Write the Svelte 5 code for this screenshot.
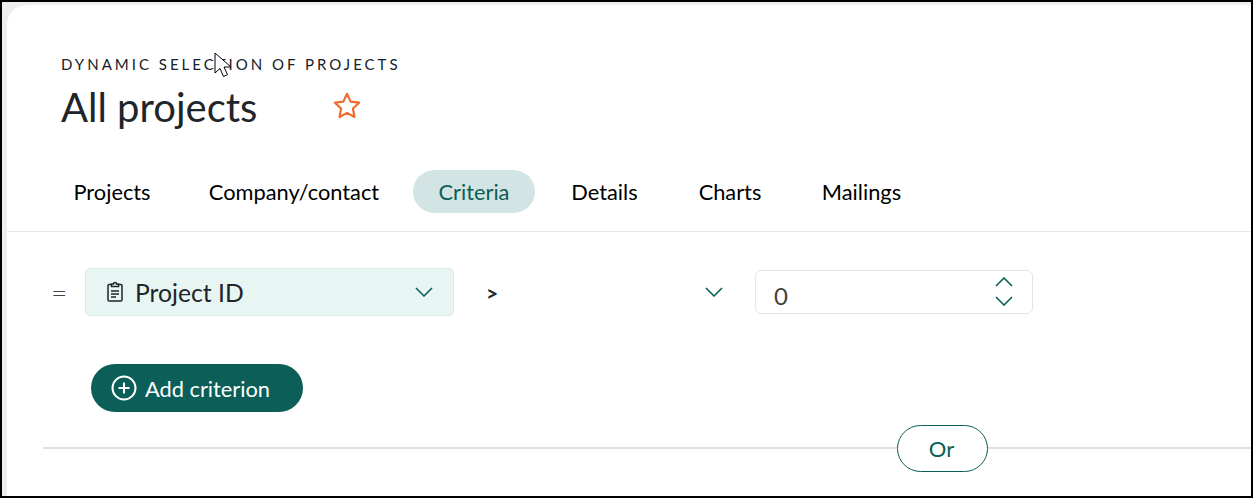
<script lang="ts">
    // Criteria tab of a dynamic project selection
    const tabs = ["Projects", "Company/contact", "Criteria", "Details", "Charts", "Mailings"];
    let active = "Criteria";
</script>

<div class="frame">
    <div class="card">
        <header class="head">
            <p class="eyebrow">DYNAMIC SELECTION OF PROJECTS</p>
            <div class="title-row">
                <h1>All projects</h1>
                <svg class="star" viewBox="0 0 28 28" width="30" height="30" aria-hidden="true">
                    <path d="M14 2.6l3.4 7.3 7.9 1-5.8 5.5 1.5 7.9-7-3.9-7 3.9 1.5-7.9-5.8-5.5 7.9-1z" />
                </svg>
            </div>
        </header>

        <nav class="tabs">
            {#each tabs as tab}
                <button class="tab" class:active={tab === active}>{tab}</button>
            {/each}
        </nav>

        <section class="criteria">
            <div class="row">
                <span class="equals">=</span>
                <div class="field-select">
                    <svg class="clip" viewBox="0 0 18 22" width="18" height="22" aria-hidden="true">
                        <path d="M5.5 3.5H3.2a1.2 1.2 0 0 0-1.2 1.2v14.1A1.2 1.2 0 0 0 3.2 20h11.6a1.2 1.2 0 0 0 1.2-1.2V4.700a1.200 1.200 0 0 0-1.200-1.200h-2.300" />
                        <path d="M5.500 5.500V3h2a1.500 1.500 0 0 1 3 0h2v2.500z" />
                        <path d="M5 10h8M5 13h8M5 16h5" />
                    </svg>
                    <span class="field-name">Project ID</span>
                    <svg class="chev first" viewBox="0 0 18 10" width="18" height="10" aria-hidden="true">
                        <path d="M1 1l8 8 8-8" />
                    </svg>
                </div>
                <div class="operator">
                    <span>&gt;</span>
                    <svg class="chev" viewBox="0 0 18 10" width="18" height="10" aria-hidden="true">
                        <path d="M1 1l8 8 8-8" />
                    </svg>
                </div>
                <div class="number">
                    <span class="value">0</span>
                    <div class="spin">
                        <svg class="chev" viewBox="0 0 18 10" width="18" height="10" aria-hidden="true">
                            <path d="M1 9l8-8 8 8" />
                        </svg>
                        <svg class="chev" viewBox="0 0 18 10" width="18" height="10" aria-hidden="true">
                            <path d="M1 1l8 8 8-8" />
                        </svg>
                    </div>
                </div>
            </div>

            <button class="add">
                <svg viewBox="0 0 26 26" width="26" height="26" aria-hidden="true">
                    <circle cx="13" cy="13" r="11.500" />
                    <path d="M13 7.500v11M7.500 13h11" />
                </svg>
                Add criterion
            </button>

            <div class="divider">
                <button class="or">Or</button>
            </div>
        </section>
    </div>

    <!-- mouse pointer caught in the screenshot -->
    <svg class="cursor" viewBox="0 0 19 28" width="19" height="28" aria-hidden="true">
        <path d="M1 1v20l5-4.500 3.500 8 4-1.800-3.500-7.700h7z" />
    </svg>
</div>

<style>
    :global(body) {
        margin: 0;
        background: #fff;
    }

    .frame {
        position: relative;
        box-sizing: border-box;
        width: 1253px;
        height: 498px;
        overflow: hidden;
        border: 2px solid #000;
        background: #ecefee;
        font-family: Lato, "Liberation Sans", sans-serif;
        color: #212529;
    }

    .card {
        height: 100%;
        margin: 3px 0 0 5px;
        background: #fff;
        border-top-left-radius: 20px;
    }

    .head {
        padding: 49px 0 0 54px;
    }

    .eyebrow {
        margin: 0;
        font-size: 15px;
        line-height: 20px;
        letter-spacing: 3px;
        color: #16202a;
    }

    .title-row {
        display: flex;
        align-items: center;
        margin-top: 10px;
    }

    h1 {
        margin: 0;
        width: 272px;
        font-size: 40px;
        font-weight: 400;
        line-height: 46px;
    }

    .star {
        margin: -2px 0 0 -1px;
        fill: none;
        stroke: #f26b2e;
        stroke-width: 2;
        stroke-linejoin: round;
    }

    .tabs {
        display: grid;
        grid-template-columns: 126px 214px 122px 115px 112px 127px;
        align-items: center;
        column-gap: 12px;
        height: 61px;
        padding: 0 0 0 42px;
        margin-top: 40px;
        border-bottom: 1px solid #e6e8e8;
    }

    .tab {
        height: 43px;
        margin-top: -19px;
        padding: 0;
        border: 0;
        border-radius: 22px;
        background: none;
        font: inherit;
        font-size: 21.800px;
        color: #000;
    }

    .tab.active {
        background: #d2e4e3;
        color: #0b5f58;
    }

    .criteria {
        padding-top: 36px;
    }

    .row {
        display: flex;
        align-items: center;
        height: 48px;
        padding-left: 44px;
    }

    .equals {
        width: 34px;
        font-size: 28px;
        font-weight: 300;
        line-height: 1;
        color: #444;
    }

    .field-select {
        box-sizing: border-box;
        display: flex;
        align-items: center;
        width: 369px;
        height: 48px;
        padding: 0 20px;
        border: 1px solid #e2e6e5;
        border-radius: 5px;
        background: #e8f6f3;
    }

    .clip {
        fill: none;
        stroke: #212529;
        stroke-width: 1.500;
    }

    .field-name {
        margin-left: 11px;
        font-size: 24.700px;
    }

    .chev {
        display: block;
        fill: none;
        stroke: #0b5f58;
        stroke-width: 1.600;
    }

    .chev.first {
        margin-left: auto;
    }

    .operator {
        box-sizing: border-box;
        display: flex;
        align-items: center;
        justify-content: space-between;
        width: 301px;
        padding: 0 32px 0 32px;
        font-size: 21px;
        font-weight: 700;
    }

    .number {
        box-sizing: border-box;
        display: flex;
        align-items: center;
        justify-content: space-between;
        width: 278px;
        height: 44px;
        padding: 0 19px 0 18px;
        border: 1px solid #e4e6e6;
        border-radius: 6px;
    }

    .value {
        margin-top: 6px;
        font-size: 24px;
        color: #444;
    }

    .spin {
        display: flex;
        flex-direction: column;
        gap: 9px;
        margin-top: -1px;
    }

    .add {
        display: flex;
        align-items: center;
        gap: 8px;
        box-sizing: border-box;
        width: 212px;
        height: 48px;
        margin: 48px 0 0 84px;
        padding: 0 0 0 20px;
        border: 0;
        border-radius: 24px;
        background: #0b5f58;
        color: #fff;
        font: inherit;
        font-size: 21.800px;
    }

    .add svg {
        fill: none;
        stroke: #fff;
        stroke-width: 2;
    }

    .divider {
        display: flex;
        align-items: center;
        height: 2px;
        margin: 35px 0 0 36px;
        padding-left: 854px;
        background: #dde1e0;
    }

    .or {
        box-sizing: border-box;
        flex: none;
        width: 91px;
        height: 47px;
        padding: 0 2px 0 0;
        border: 1px solid #0b5f58;
        border-radius: 24px;
        background: #fff;
        color: #0b5f58;
        font: inherit;
        font-size: 22px;
    }

    .cursor {
        position: absolute;
        left: 212px;
        top: 50px;
        fill: #fff;
        stroke: #000;
        stroke-width: 1;
    }
</style>
